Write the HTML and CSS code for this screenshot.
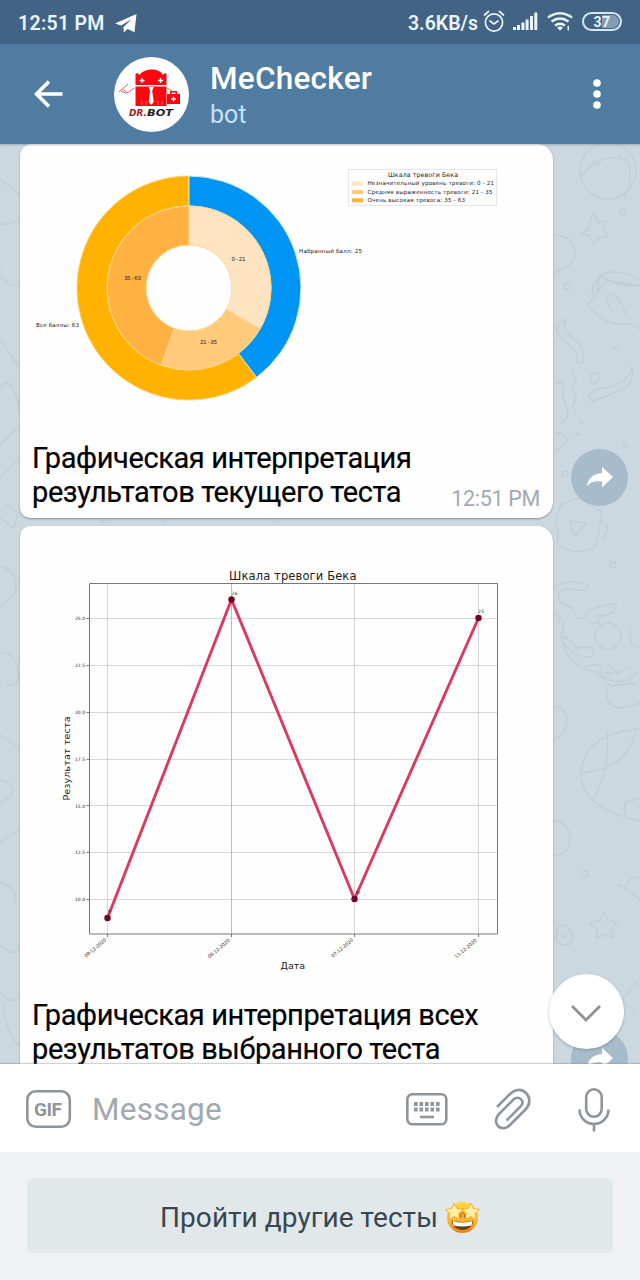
FILE: index.html
```html
<!DOCTYPE html>
<html lang="ru">
<head>
<meta charset="utf-8">
<title>MeChecker</title>
<link rel="stylesheet" href="styles.css">
</head>
<body>
<div class="screen">
  <div class="status">
    <span class="clock">12:51 PM</span>
    <svg class="plane" width="22" height="19" viewBox="0 0 22 19"><path d="M0 9.5 21.5 0 19.5 18.2 12.5 15 8.8 18.4 8.5 13 16.5 5.2 6.2 11.6Z"/></svg>
    <span class="rate">3.6KB/s</span>
    <svg class="sicons" width="142" height="24" viewBox="482 11 142 24">
      <g fill="none" stroke="#e9f4fb" stroke-width="1.7" stroke-linecap="round">
        <circle cx="494" cy="23.5" r="8.6"/><path d="M490 22l4 3 4-3M484.5 16l4-3.5M503.500 16l-4-3.500"/>
      </g>
      <path fill="#e9f4fb" d="M513 28h3v3h-3zM517 26h3v5h-3zM521.400 23.500h3V31h-3zM525.600 20.500h3V31h-3zM530 17h3v14h-3zM534.300 13.500h3V31h-3z"/>
      <g fill="none" stroke="#e9f4fb" stroke-width="2.500"><path d="M548 18.500q12-8.500 24 0M551.500 22.500q8.500-6 17 0M555 26.500q5-3.500 10 0"/></g>
      <path fill="#e9f4fb" d="M557 28.500q3-2 6 0l-3 3.200zM567.500 27h1.500v5l-2-2h.5z"/>
      <rect x="583" y="14" width="38" height="17" rx="8.500" fill="none" stroke="#d6e6f0" stroke-width="2"/>
      <path d="M602 16h10.500a6.500 6.500 0 0 1 0 13H602z" fill="#829db2"/>
      <text x="593.500" y="28" textLength="16.500" class="batt">37</text>
    </svg>
  </div>

  <header class="head">
    <svg class="back" width="30" height="28" viewBox="0 0 30 28"><path d="M28.500 14H3M15 1.500 2.500 14 15 26.500"/></svg>
    <svg class="avatar" width="75" height="75" viewBox="0 0 75 75">
      <circle cx="37.500" cy="37.500" r="37.500" fill="#fff"/>
      <path fill="#fa0710" d="M21.500 28V17l2-1 2 2q3-5 11.500-5.500T49 18l2-2 1.500 1v11z"/>
      <path fill="#fa0710" d="M21.500 29.500h31V49h-31z"/>
      <path fill="#fa0710" d="M53 37h13v10H53zM56 37v-3h7v3h-1.500v-1.500h-4V37z"/>
      <path d="M59.500 39.500v5M57 42h5M28 21v5M25.500 23.500h5M46.500 21v5M44 23.500h5" stroke="#fff" stroke-width="1.300"/>
      <path d="M20.500 31 13 36l-4-4M5 35l9-8M12 36l-5-2M53 31l5 3" stroke="#e56b6d" fill="none"/>
      <path d="M34.500 30h5l-1.300 4 1.600 11-2.600 3-2.600-3 1.500-11z" fill="#fff"/>
      <path d="M28 44v4M32 44v4M44 44v4M48 44v4" stroke="#f88" stroke-width=".8"/>
      <text x="15" y="58.500" class="dr" textLength="18" lengthAdjust="spacingAndGlyphs">DR.</text><text x="33" y="58.500" class="dr dk" textLength="26" lengthAdjust="spacingAndGlyphs">BOT</text>
    </svg>
    <div class="who"><div class="name">MeChecker</div><div class="sub">bot</div></div>
    <svg class="more" width="8" height="30" viewBox="0 0 8 30"><circle cx="4" cy="4" r="3.800"/><circle cx="4" cy="15" r="3.800"/><circle cx="4" cy="26" r="3.800"/></svg>
  </header>

  <main class="chat">
    <svg class="wall" width="640" height="920" viewBox="0 144 640 920">
      <circle cx="608" cy="171" r="28"/><path d="M581 176q18-22 40-18l8 4q4 20-5 38M592 158l4 7 4-1M618 154l5 6 5-2"/>
      <path d="m594 214 4 8 8-1-3 8 4 8-8 1-6 6-3-8-8-3 7-5 1-9zM553 235q22 0 22 20-1 12-22 18M597 285q0-14 20-13 15 2 23 8M600 274l-3 18 10-12 33 6M600 274q8 12 40 12M587 304l9-7q-8-10 1-16M587 304q17 23 42 20l11 5M606 300q4-12 12-2l10 19M606 300l8 14M557 326l8-6q-2 12 8 18 12 8 10 25h-6q3-12-8-18-13-8-12-19zM632 366q4 18-13 25t-27 10l-4-6q4-6 20-8 24-6 24-21zM590 377q2-6 8-4 5 6-3 10-7 0-4-6M572 369l4 12-4 8 4 8-3 10 3 8M555 384l8-3q-2 14 3 25t-5 18M555 432q12 0 12 10l-12 10M580 420l4 5M575 433l5 2"/>
      <path d="M558 530q-5-10 4-26l16-6 24 14-6 34q-20 12-38-2zM570 521l16 2-12 14zM600 521q14 4 2 18"/>
      <path d="M553 588q12-10 34-4 3 8-8 6-20-3-21 6 0 8 14 12l6 10q10 2 10-8l18-5q14-4 8 7-10 5-14 3 2 10-9 8M562 636q12 6 15 12 20-4 16 8-8 3-18-3-14-8-13-17M553 612q16 10 8 22 6 36 34 37l16 15 25-3M608 623a13 13 0 1 0 13 13 13 13 0 0 0-13-13M586 667q16-7 16 8 18 15 36-3M631 626q-4 20 9 22M605 672q10 5 25-5M608 665l10 8M607 687q-4 30 33 16M553 707q13 0 14 12-1 18-14 21"/>
      <path d="M640 729q-58 5-59 45 1 35 59 47M581 773q50-5 55-45M607 731q4 40-15 70M625 818v-16l15-4M553 820q18 4 17 20t-17 15M604 913l4 8 9 1-6 7 2 9-9-4-8 4 1-9-7-6 9-2zM625 888q5-14 15-10M625 888l15 12M558 938q-5-10 5-13 13 4 8 18-12 6-16-6 1-6 6-5M562 937l5-1M618 1005l18-22 4 3M620 1000l16 12"/>
      <path d="M0 179l19 15M0 225l19-4M2 265q-12 8 4 16 8 8 12 1M0 339l18 27M0 388q9-12 15 5t4 17M0 445l18-18M0 478l19-19M4 503l14 10-4 15-14-10M0 566q20 6 15 27L0 607M0 652q15 1 18 18t-12 15M0 735l19 13M0 780q15 2 12 15l-12 9M0 842l19-12M0 882q20 8 14 20M0 945q18 15 19 0M0 990q10 16 18 8M4 1005q0 26 16 42M160 519q5 5 10 0M270 519q8 6 12 0M100 521h10"/>
      <g class="specks"><circle cx="623" cy="212" r="3"/><circle cx="567" cy="286" r="3"/><circle cx="565" cy="474" r="3"/><circle cx="625" cy="445" r="2"/><circle cx="613" cy="565" r="3"/><circle cx="585" cy="874" r="3"/></g>
      <path d="M613 347l6 3M617 884l6 3"/>
    </svg>

    <div class="row">
      <article class="bubble first">
        <svg class="pic" width="533" height="290" viewBox="20 144 533 290">
          <g stroke-width="1">
            <path fill="#ffb300" stroke="#ffd27a" d="M189 176A112 112 0 1 0 256.600 377.300L238.500 353.400A82 82 0 1 1 189 206z"/>
            <path fill="#0095f4" stroke="#d8ecd0" d="M189 176A112 112 0 0 1 256.600 377.300L238.500 353.400A82 82 0 0 0 189 206z"/>
            <g stroke="#ffd591">
              <path fill="#ffe4c1" d="M189 206A82 82 0 0 1 260 329L226.200 309.500A43 43 0 0 0 189 245z"/>
              <path fill="#ffca7c" d="M260 329A82 82 0 0 1 161 365L174.300 328.400A43 43 0 0 0 226.200 309.500z"/>
              <path fill="#ffb241" d="M161 365A82 82 0 0 1 189 206V245A43 43 0 0 0 174.300 328.400z"/>
            </g>
          </g>
          <g class="plot s5">
            <text x="231.500" y="261" textLength="14">0 - 21</text><text x="124" y="279.500" textLength="17">35 - 63</text><text x="200" y="343.500" textLength="17">21 - 35</text>
            <text x="36" y="326.500" textLength="43">Все баллы: 63</text><text x="299" y="252.500" textLength="63">Набранный балл: 25</text>
          </g>
          <rect x="348.500" y="169.500" width="148" height="36" fill="none" stroke="#e6e6e6"/>
          <path fill="#ffe4c1" d="M352 181.500h11v4h-11z"/><path fill="#ffca7c" d="M352 190h11v4h-11z"/><path fill="#fbb03b" d="M352 198.300h11v4h-11z"/>
          <g class="plot s5"><text x="388" y="176.500" textLength="70" class="s6">Шкала тревоги Бека</text><text x="367.500" y="185.300" textLength="126.500">Незначительный уровень тревоги: 0 - 21</text><text x="367.500" y="193.800" textLength="125">Средняя выраженность тревоги: 21 - 35</text><text x="367.500" y="202.300" textLength="97.500">Очень высокая тревога: 35 - 63</text></g>
        </svg>
        <p class="cap">Графическая интерпретация<br>результатов текущего теста</p>
        <time class="time">12:51 PM</time>
      </article>
      <div class="share"><svg width="28" height="24" viewBox="0 0 28 24"><path d="M16 1 27 11 16 21.500V15.500Q5 14 1 20.500 2 8.500 16 7z"/></svg></div>
    </div>

    <div class="row">
      <article class="bubble second">
        <svg class="pic" width="533" height="465" viewBox="20 526 533 465">
          <path fill="none" stroke="#b0b0b0" stroke-opacity=".5" d="M107.500 583v351M354.500 583v351M478.500 583v351M90 618.500h407M90 665.500h407M90 712.500h407M90 759.500h407M90 805.500h407M90 852.500h407M90 899.500h407"/>
          <path stroke="#adadad" stroke-opacity=".8" d="M231.500 583v351"/>
          <path fill="none" stroke="#777" d="M86.500 618.500h3M86.500 665.500h3M86.500 712.500h3M86.500 759.500h3M86.500 805.500h3M86.500 852.500h3M86.500 899.500h3M107.500 934v3M231.500 934v3M354.500 934v3M478.500 934v3M89.500 583.500h408v350.500h-408z"/>
          <path fill="none" stroke="#d93a60" stroke-width="2.900" stroke-linejoin="round" d="M107.500 918 231.500 599.500 354.500 899 478.500 618"/>
          <g fill="#750022"><circle cx="107.500" cy="918" r="3.200"/><circle cx="231.500" cy="599.500" r="3.200"/><circle cx="354.500" cy="899" r="3.200"/><circle cx="478.500" cy="618" r="3.200"/></g>
          <g class="plot s4"><text x="75" y="620" textLength="10">25.0</text><text x="75" y="667" textLength="10">22.5</text><text x="75" y="713.500" textLength="10">20.0</text><text x="75" y="760.500" textLength="10">17.5</text><text x="75" y="807.500" textLength="10">15.0</text><text x="75" y="854" textLength="10">12.5</text><text x="75" y="901" textLength="10">10.0</text>
            <text x="231.500" y="594.500" textLength="6">26</text><text x="478" y="613" textLength="6">25</text><text x="108" y="913">9</text><text x="355" y="894" textLength="5">10</text></g>
          <g class="plot s45">
            <text transform="translate(86 958)rotate(-40)" textLength="27">09-12-2020</text><text transform="translate(209.500 958.500)rotate(-40)" textLength="27">06-12-2020</text><text transform="translate(333 958)rotate(-40)" textLength="27">07-12-2020</text><text transform="translate(456.500 958.500)rotate(-40)" textLength="27">11-12-2020</text></g>
          <text x="229" y="580" textLength="127.500" class="plot s11">Шкала тревоги Бека</text>
          <text x="280.500" y="969" textLength="24.500" class="plot s9">Дата</text>
          <text transform="translate(69.500 800.500)rotate(-90)" textLength="84" class="plot s9">Результат теста</text>
        </svg>
        <p class="cap">Графическая интерпретация всех<br>результатов выбранного теста</p>
      </article>
      <div class="share low"><svg width="28" height="24" viewBox="0 0 28 24"><path d="M16 1 27 11 16 21.500V15.500Q5 14 1 20.500 2 8.500 16 7z"/></svg></div>
    </div>
    <div class="down"><svg width="32" height="18" viewBox="0 0 32 18"><path d="m2 2 14 14L30 2"/></svg></div>
  </main>

  <section class="compose">
    <svg class="gif" width="46" height="39" viewBox="0 0 46 39"><rect x="1.300" y="1.300" width="42.500" height="35.500" rx="8.500"/><text x="8" y="26" textLength="28">GIF</text></svg>
    <span class="ph">Message</span>
    <svg class="ic" width="42" height="33" viewBox="0 0 42 33"><rect x="1.300" y="1.300" width="39" height="30" rx="5"/><path stroke-width="4" stroke-dasharray="3.600 1.900" d="M8 11h26M8 16.500h26"/><path d="M14 24h14"/></svg>
    <svg class="ic clip" width="38" height="44" viewBox="0 0 38 44"><path d="M3 19 15.500 6.500C20.500 1.500 27 0 32 5S36 17 31.500 21.500L15.500 37.500C12 41 7 41 4 38S1.500 29.500 5 26L19.500 11.500C22 9 25 9.300 27 11.300S29 16 26.500 18.500L12.500 32.500"/></svg>
    <svg class="ic mic" width="32" height="44" viewBox="0 0 32 44"><rect x="8.200" y="1.300" width="15.500" height="27.500" rx="7.750"/><path d="M1.500 21.500a14.500 14.500 0 0 0 29 0M16 36v7.500"/></svg>
  </section>

  <section class="keys">
    <button class="key"><span class="kt">Пройти другие тесты</span>
      <svg width="35" height="34" viewBox="0 0 35 34">
        <defs><linearGradient id="f" x1="0" y1="0" x2="0" y2="1"><stop offset="0" stop-color="#ffd83e"/><stop offset=".6" stop-color="#fcb62a"/><stop offset="1" stop-color="#e58112"/></linearGradient></defs>
        <circle cx="17.500" cy="17.500" r="15.500" fill="url(#f)"/>
        <path d="M6.500 20.500q11 3 22 0-1 9-11 9.500-10-.5-11-9.500z" fill="#67401c"/>
        <path d="M7.500 21q10 3 20 0l-1 4.500q-9 2-18 0z" fill="#fff"/>
        <path d="m9 3 3 5.500 6 .5-4.500 4.500 1.500 6-6-3-5.500 3.500L5 13.500.5 9.500l6-1zM26 3l2.500 5.500 6 1-4.500 4 1.500 6.500-5.500-3.500-6 3 1.500-6L17 9l6-.5z" fill="#fff0a8" stroke="#f3a51c" stroke-width=".8"/>
        <path d="M15 18q0-5 2.500-6 2.500 1 2.500 6" fill="#f5a623" stroke="#a8651a" stroke-width="1"/>
      </svg>
    </button>
  </section>
</div>
</body>
</html>
```
FILE: styles.css
```css
* { box-sizing: border-box; }
body { margin: 0; font-family: Roboto, "Noto Sans", sans-serif; }
.screen { width: 640px; height: 1280px; display: flex; flex-direction: column; overflow: hidden; }
.status { height: 44px; background: #426383; display: flex; align-items: center; padding: 2px 16px 0 18px; color: #e9f4fb; font-weight: 600; font-size: 19.5px; flex: none; }
.clock { letter-spacing: .3px; white-space: nowrap; }
.plane { margin-left: 10px; fill: #fff; }
.rate { margin-left: auto; margin-right: 4px; }
.sicons { margin-top: -2px; }
.batt { font: bold 14px Roboto, sans-serif; fill: #e9f4fb; }
.head { height: 100px; background: #507ca1; display: flex; align-items: center; padding: 0 39px 0 34px; flex: none; position: relative; z-index: 2; box-shadow: 0 1px 2px rgba(60,80,100,.35); }
.back { fill: none; stroke: #fff; stroke-width: 3.6; }
.avatar { margin-left: 50px; }
.dr { font: italic bold 9.5px "DejaVu Sans", sans-serif; fill: #a91d24; }
.dk { fill: #222; }
.who { margin-left: 21px; flex: 1; margin-top: 4px; }
.name { color: #fff; font-size: 31.5px; font-weight: 500; letter-spacing: .25px; line-height: 38px; }
.sub { color: #c5e2f8; font-size: 25px; line-height: 34px; }
.more { fill: #fff; }
.chat { height: 920px; flex: none; background: #ccd8e0; position: relative; overflow: hidden; }
.wall { position: absolute; inset: 0; fill: none; stroke: #bccad3; stroke-width: 1.4; opacity: .7; }
.row { display: flex; align-items: flex-end; position: relative; padding-left: 20px; margin-bottom: 8px; }
.bubble { width: 533px; background: #fefefe; position: relative; box-shadow: 0 1px 2px rgba(105,130,150,.8); }
.first { height: 374px; border-radius: 12px 16px 16px 10px; }
.second { height: 570px; border-radius: 10px 16px 16px 8px; }
.pic { display: block; }
.cap { margin: 7px 0 0 12px; font-size: 29px; line-height: 34px; letter-spacing: -.4px; color: #000; -webkit-text-stroke: .2px #000; white-space: nowrap; }
.time { position: absolute; right: 13px; bottom: 6px; font-size: 21.5px; letter-spacing: -.3px; line-height: 26px; color: #a1aab3; }
.share { width: 57px; height: 57px; margin: 0 0 12px 18px; border-radius: 50%; background: #a7bccb; display: flex; align-items: center; justify-content: center; }
.share svg { fill: #fff; }
.low { margin-bottom: 9px; }
.down { position: absolute; left: 549px; top: 830px; width: 75px; height: 75px; border-radius: 50%; background: #fff; display: flex; align-items: center; justify-content: center; box-shadow: 0 1px 3px rgba(70,90,110,.4); padding: 3px 1px 0 0; }
.down path { fill: none; stroke: #8a9298; stroke-width: 2.8; }
.plot { font-family: "DejaVu Sans", sans-serif; fill: #222; }
.s4 { font-size: 4.5px; }
.s45 { font-size: 4.8px; }
.s5 { font-size: 5.6px; }
.s6 { font-size: 6.3px; }
.s9 { font-size: 9.5px; }
.s11 { font-size: 11.5px; }
.compose { height: 88px; flex: none; background: #fff; display: flex; align-items: center; padding: 3px 30px 0 26px; position: relative; z-index: 2; box-shadow: 0 -1px 1px rgba(120,130,140,.35); }
.gif rect { fill: none; stroke: #8e959b; stroke-width: 2.6; }
.gif text { font: bold 19px Roboto, sans-serif; fill: #8e959b; }
.ph { color: #a0a9af; font-size: 31.5px; letter-spacing: .25px; margin-left: 20px; flex: 1; }
.ic { fill: none; stroke: #8e959b; stroke-width: 2.6; }
.clip { margin-left: 46px; }
.mic { margin-left: 46px; }
.keys { height: 128px; flex: none; background: #eff1f5; padding: 26px 27px; }
.key { width: 586px; height: 75px; border: 0; border-radius: 6px; background: #e2e7ea; display: flex; align-items: center; justify-content: center; gap: 7px; font: 28px Roboto, sans-serif; color: #354850; padding: 3px 0 0; }
.kt { letter-spacing: .05px; }
```
